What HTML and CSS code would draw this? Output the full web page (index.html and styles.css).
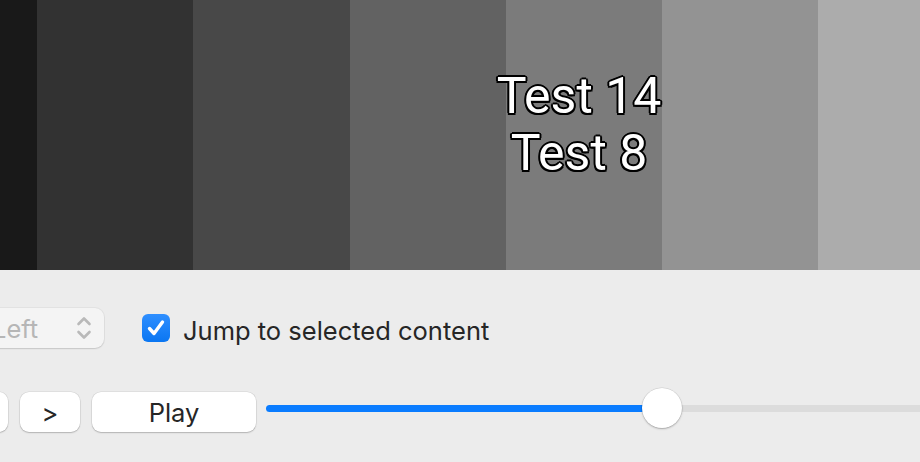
FILE: index.html
```html
<!DOCTYPE html>
<html lang="en">
<head>
    <meta charset="UTF-8">
    <meta name="viewport" content="width=device-width, initial-scale=1.0">
    <title>Stripes Preview</title>
    <link rel="stylesheet" href="styles.css">
</head>
<body>
    <div class="preview">
        <div class="stripe s1"></div>
        <div class="stripe s2"></div>
        <div class="stripe s3"></div>
        <div class="stripe s4"></div>
        <div class="stripe s5"></div>
        <div class="stripe s6"></div>
        <div class="stripe s7"></div>
        <div class="caption">
            <div>Test 14</div>
            <div>Test 8</div>
        </div>
    </div>

    <div class="controls">
        <div class="row top-row">
            <div class="popup">
                <span class="popup-text">Left</span>
                <svg class="chevrons" width="16" height="26" viewBox="0 0 16 26">
                    <path d="M2.5 9 L8 3.5 L13.5 9" fill="none" stroke="#b9b9b9" stroke-width="2.6" stroke-linecap="round" stroke-linejoin="round"/>
                    <path d="M2.5 17 L8 22.5 L13.5 17" fill="none" stroke="#b9b9b9" stroke-width="2.6" stroke-linecap="round" stroke-linejoin="round"/>
                </svg>
            </div>
            <label class="check">
                <span class="check-box">
                    <svg width="28" height="28" viewBox="0 0 28 28">
                        <path d="M7.5 14.5 L12 19.5 L20.5 8" fill="none" stroke="white" stroke-width="3.4" stroke-linecap="round" stroke-linejoin="round"/>
                    </svg>
                </span>
                <span class="check-label">Jump to selected content</span>
            </label>
        </div>

        <div class="row bottom-row">
            <button class="btn btn-prev">&lt;</button>
            <button class="btn btn-next">&gt;</button>
            <button class="btn btn-play">Play</button>
            <div class="slider">
                <div class="slider-fill"></div>
                <div class="slider-knob"></div>
                <div class="slider-rest"></div>
            </div>
        </div>
    </div>
</body>
</html>
```

FILE: styles.css
```css
body {
    margin: 0;
    width: 920px;
    height: 462px;
    overflow: hidden;
    background: #ececec;
    font-family: Inter, 'Noto Sans', sans-serif;
}

.preview {
    display: flex;
    height: 270px;
    position: relative;
}

.stripe {
    height: 100%;
    flex: none;
}

.s1 { width: 37px; background: #191919; }
.s2 { width: 156px; background: #323232; }
.s3 { width: 157px; background: #484848; }
.s4 { width: 156px; background: #626262; }
.s5 { width: 156px; background: #7b7b7b; }
.s6 { width: 156px; background: #939393; }
.s7 { width: 102px; background: #acacac; }

.caption {
    position: absolute;
    top: 68px;
    left: 479px;
    width: 200px;
    text-align: center;
    font-family: Roboto, sans-serif;
    font-size: 50px;
    line-height: 57px;
    color: white;
    text-shadow:
        -1.5px -1.5px 0 #000, 1.5px -1.5px 0 #000,
        -1.5px 1.5px 0 #000, 1.5px 1.5px 0 #000,
        0 -2px 0 #000, 0 2px 0 #000,
        -2px 0 0 #000, 2px 0 0 #000;
}

.controls {
    padding-top: 38px;
}

.row {
    display: flex;
}

.top-row {
    height: 40px;
    align-items: center;
}

.popup {
    flex: none;
    width: 150px;
    height: 40px;
    margin-left: -46px;
    box-sizing: border-box;
    display: flex;
    align-items: center;
    justify-content: space-between;
    padding: 0 12px 0 38px;
    background: #f4f4f4;
    border-radius: 9px;
    box-shadow: 0 0 0 1px rgba(0, 0, 0, 0.04), 0 1px 1.5px rgba(0, 0, 0, 0.12);
}

.popup-text {
    font-size: 25.5px;
    color: #b6b6b6;
}

.check {
    display: flex;
    align-items: center;
    margin-left: 38px;
}

.check-box {
    width: 28px;
    height: 28px;
    border-radius: 6px;
    background: linear-gradient(#2f8fff, #0a76f2);
    display: block;
}

.check-box svg {
    display: block;
}

.check-label {
    margin-left: 13px;
    margin-top: 4px;
    font-size: 25.5px;
    color: #262626;
}

.bottom-row {
    margin-top: 44px;
    align-items: flex-start;
}

.btn {
    flex: none;
    height: 40px;
    margin-right: 12px;
    border: none;
    border-radius: 9px;
    background: white;
    box-shadow: 0 0 0 0.5px rgba(0, 0, 0, 0.1), 0 1px 1.5px rgba(0, 0, 0, 0.2);
    font-family: Inter, 'Noto Sans', sans-serif;
    font-size: 25.5px;
    color: #262626;
    padding: 0;
}

.btn-prev {
    width: 60px;
    margin-left: -52px;
}

.btn-next {
    width: 60px;
}

.btn-play {
    width: 164px;
    margin-right: 10px;
}

.slider {
    flex: 1;
    display: flex;
    align-items: center;
    height: 40px;
    margin-top: -4px;
}

.slider-fill {
    width: 386px;
    height: 7px;
    margin-right: -10px;
    background: #0a7cff;
    border-radius: 4px 0 0 4px;
}

.slider-knob {
    flex: none;
    width: 40px;
    height: 40px;
    border-radius: 50%;
    background: white;
    box-shadow: 0 0 0 0.5px rgba(0, 0, 0, 0.12), 0 1px 2px rgba(0, 0, 0, 0.25);
    position: relative;
    z-index: 1;
}

.slider-rest {
    flex: 1;
    height: 7px;
    margin-left: -10px;
    background: #dcdcdc;
}
```
